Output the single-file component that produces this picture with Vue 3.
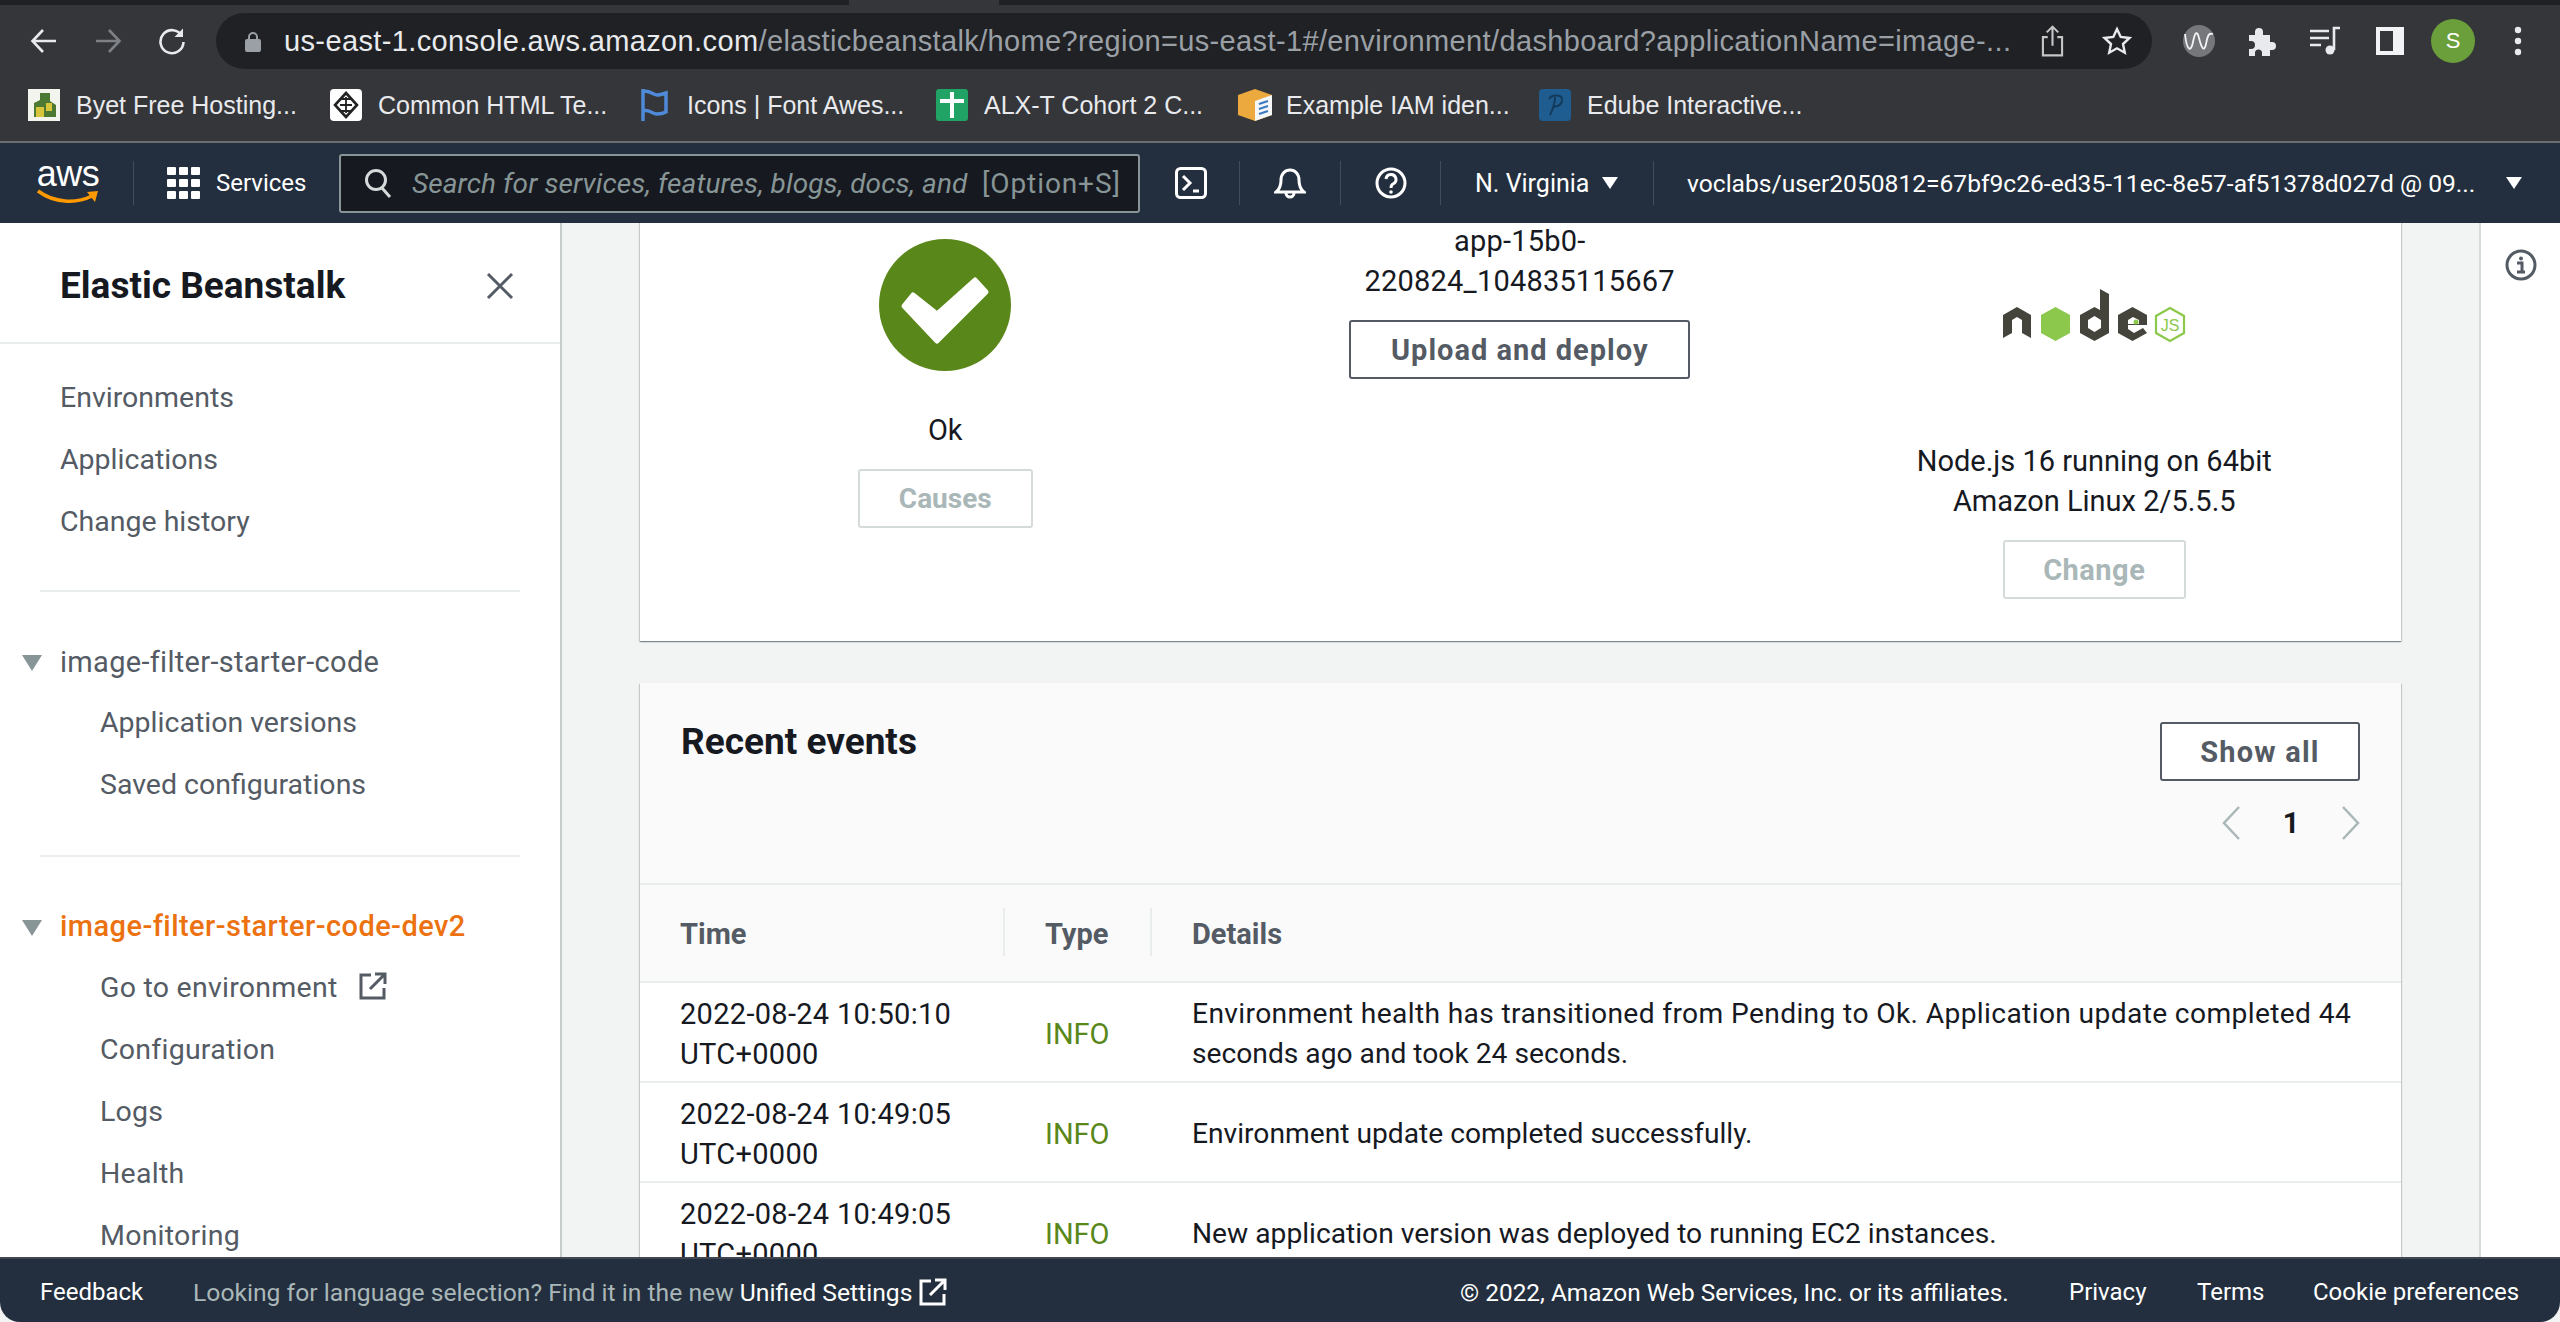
<script setup>
const bookmarks = [
  { id: 'byet', label: 'Byet Free Hosting...', width: 302 },
  { id: 'html', label: 'Common HTML Te...', width: 311 },
  { id: 'flag', label: 'Icons | Font Awes...', width: 295 },
  { id: 'sheet', label: 'ALX-T Cohort 2 C...', width: 302 },
  { id: 'box', label: 'Example IAM iden...', width: 301 },
  { id: 'edube', label: 'Edube Interactive...', width: 263 }
]

const events = [
  {
    time: ['2022-08-24 10:50:10', 'UTC+0000'],
    details: 'Environment health has transitioned from Pending to Ok. Application update completed 44 seconds ago and took 24 seconds.'
  },
  {
    time: ['2022-08-24 10:49:05', 'UTC+0000'],
    details: 'Environment update completed successfully.'
  },
  {
    time: ['2022-08-24 10:49:05', 'UTC+0000'],
    details: 'New application version was deployed to running EC2 instances.'
  }
]
</script>

<template>
  <div class="app">
    <div class="tabstrip"><div class="tab"></div></div>

    <div class="toolbar">
      <div class="nav-btns">
        <svg class="tb-icon" viewBox="0 0 28 28" fill="none" stroke="#e8eaed" stroke-width="2.6"><path d="M26 14H3M13 3 2.5 14 13 25" /></svg>
        <svg class="tb-icon dim" viewBox="0 0 28 28" fill="none" stroke="#7e8185" stroke-width="2.6"><path d="M2 14h23M15 3l10.5 11L15 25" /></svg>
        <svg class="tb-icon" viewBox="0 0 28 28" fill="none" stroke="#e8eaed" stroke-width="2.6"><path d="M24 9a11.5 11.5 0 1 0 1.5 6" /><path d="M25 1.5V10h-8.5z" fill="#e8eaed" stroke="none" /></svg>
      </div>
      <div class="urlbar">
        <svg class="lock" viewBox="0 0 16 21"><path d="M4 9V6a4 4 0 0 1 8 0v3" fill="none" stroke="#9aa0a6" stroke-width="2" /><rect y="8" width="16" height="13" rx="2" fill="#9aa0a6" /></svg>
        <div class="url"><span class="host">us-east-1.console.aws.amazon.com</span>/elasticbeanstalk/home?region=us-east-1#/environment/dashboard?applicationName=image-...</div>
        <svg class="share" viewBox="0 0 24 34" fill="none" stroke="#c4c7c5" stroke-width="2.2"><path d="M12 22V2M6 8l6-6 6 6M7 13H2v19h20V13h-5" /></svg>
        <svg class="star" viewBox="0 0 30 30" fill="none" stroke="#e8eaed" stroke-width="2.4"><path d="M15 3l3.700 8 8.800 1-6.500 6 1.800 8.700L15 22.300 7.200 26.700l1.800-8.700-6.500-6 8.800-1z" /></svg>
      </div>
      <div class="ext-icons">
        <svg class="ext" viewBox="0 0 32 32"><circle cx="16" cy="16" r="16" fill="#75777a" /><path d="M2 9c2 18 6 18 8 8s4-12 6-4 5 16 7 6 3-11 7-10" fill="none" stroke="#f1f3f4" stroke-width="1.800" /></svg>
        <svg class="puzzle" viewBox="0 0 30 30"><path d="M3 9h6V6a4 4 0 0 1 8 0v3h7v7h2a4 4 0 0 1 0 8h-2v6H16v-3a3.500 3.500 0 0 0-7 0v3H3v-7h2a4 4 0 0 0 0-8H3z" fill="#e8eaed" /></svg>
        <svg class="queue" viewBox="0 0 32 30" fill="none" stroke="#e8eaed" stroke-width="2.600"><path d="M1 5h19M1 12h19M1 19h11M25 24V2h6" /><circle cx="21" cy="24" r="4.500" fill="#e8eaed" stroke="none" /></svg>
        <svg class="panel" viewBox="0 0 28 28"><rect width="28" height="28" fill="#f1f3f4" /><rect x="4" y="4" width="13" height="20" fill="#35363a" /></svg>
        <div class="avatar">S</div>
        <svg class="kebab" viewBox="0 0 8 32"><circle cx="4" cy="5" r="3.200" fill="#e8eaed" /><circle cx="4" cy="16" r="3.200" fill="#e8eaed" /><circle cx="4" cy="27" r="3.200" fill="#e8eaed" /></svg>
      </div>
    </div>

    <div class="bookmarks">
      <div v-for="b in bookmarks" :key="b.id" class="bookmark" :style="{ width: b.width + 'px' }">
        <svg v-if="b.id === 'byet'" class="fav" viewBox="0 0 32 32"><rect width="32" height="32" fill="#f4f4ee" /><path d="M12 4h10v8l6 4v12H6V14l6-3z" fill="#4d7a33" /><path d="M8 18h8v10H8zM18 14h6v8h-6z" fill="#d7c53c" /></svg>
        <svg v-else-if="b.id === 'html'" class="fav" viewBox="0 0 32 32"><rect width="32" height="32" rx="4" fill="#fff" /><path d="M16 4 27 16 16 28 5 16z" fill="none" stroke="#222" stroke-width="2.600" /><path d="M11 10h10M11 22h10M10 16h12M16 8v16" stroke="#222" stroke-width="1.800" /></svg>
        <svg v-else-if="b.id === 'flag'" class="fav flag" viewBox="0 0 28 32"><path d="M2 0v32M2 3c6-3 9 3 14 3 3 0 6-1 9-2v19c-4 2-6 2-9 2-5 0-8-5-14-3" fill="none" stroke="#4f8ad8" stroke-width="3.500" /></svg>
        <svg v-else-if="b.id === 'sheet'" class="fav" viewBox="0 0 32 32"><rect width="32" height="32" rx="3" fill="#21a366" /><path d="M16 3v26M4 12h24" stroke="#fff" stroke-width="4" /></svg>
        <svg v-else-if="b.id === 'box'" class="fav wide" viewBox="0 0 34 32"><path d="M17 0 34 6v20L17 32 0 26V6z" fill="#eca93e" /><path d="M17 12v20l17-6V6z" fill="#f4f6f8" /><path d="M21 15l9-3M21 20l9-3M21 25l9-3" stroke="#3b78c2" stroke-width="2" /></svg>
        <svg v-else class="fav" viewBox="0 0 32 32"><rect width="32" height="32" rx="4" fill="#1f5c90" /><path d="M10 10c3-5 15-5 13 2-1 5-6 6-9 5M16 8c0 8-3 14-5 18" fill="none" stroke="#143a5a" stroke-width="2" /></svg>
        <span class="bm-label">{{ b.label }}</span>
      </div>
    </div>

    <header class="awsnav">
      <div class="aws-logo">
        <span class="aws-word">aws</span>
        <svg class="smile" viewBox="0 0 62 16"><path d="M1 2c16 12 38 13 54 5" fill="none" stroke="#ff9900" stroke-width="3.500" /><path d="M50 3l11-1-3 11z" fill="#ff9900" /></svg>
      </div>
      <div class="nav-sep sep-logo"></div>
      <svg class="grid-icon" viewBox="0 0 33 32"><g fill="#fff"><rect width="9" height="8" rx="1" /><rect x="12" width="9" height="8" rx="1" /><rect x="24" width="9" height="8" rx="1" /><rect y="12" width="9" height="8" rx="1" /><rect x="12" y="12" width="9" height="8" rx="1" /><rect x="24" y="12" width="9" height="8" rx="1" /><rect y="24" width="9" height="8" rx="1" /><rect x="12" y="24" width="9" height="8" rx="1" /><rect x="24" y="24" width="9" height="8" rx="1" /></g></svg>
      <span class="services">Services</span>
      <div class="search">
        <svg class="search-icon" viewBox="0 0 28 30" fill="none" stroke="#d5dbdb" stroke-width="3"><circle cx="12" cy="12" r="9.500" /><path d="M18 20l8 9" /></svg>
        <span class="placeholder">Search for services, features, blogs, docs, and</span>
        <span class="shortcut">[Option+S]</span>
      </div>
      <svg class="term-icon" viewBox="0 0 32 32" fill="none" stroke="#fff" stroke-width="3"><rect x="1.500" y="1.500" width="29" height="29" rx="4" /><path d="M8 9l7 7-7 7" /><path d="M18 24h6" /></svg>
      <div class="nav-sep sep-term"></div>
      <svg class="bell-icon" viewBox="0 0 32 32" fill="none" stroke="#fff" stroke-width="3"><path d="M2 25c4-3 5-7 5-12 0-6 4-10 9-10s9 4 9 10c0 5 1 9 5 12z" /><path d="M12 26a4 4 0 0 0 8 0" /></svg>
      <div class="nav-sep sep-bell"></div>
      <svg class="help-icon" viewBox="0 0 32 32" fill="none" stroke="#fff" stroke-width="3"><circle cx="16" cy="16" r="14" /><path d="M11 12a5 5 0 1 1 7 5c-2 1-2 2-2 4" /><circle cx="16" cy="25" r="1.800" fill="#fff" stroke="none" /></svg>
      <div class="nav-sep sep-help"></div>
      <span class="region">N. Virginia</span>
      <span class="caret caret-region"></span>
      <div class="nav-sep sep-region"></div>
      <span class="account">voclabs/user2050812=67bf9c26-ed35-11ec-8e57-af51378d027d @ 09...</span>
      <span class="caret caret-account"></span>
    </header>

    <div class="body">
      <aside class="sidebar">
        <div class="side-head">
          <span class="side-title">Elastic Beanstalk</span>
          <svg class="close" viewBox="0 0 28 28" fill="none" stroke="#545b64" stroke-width="3"><path d="M2 2l24 24M26 2 2 26" /></svg>
        </div>
        <div class="side-group first">
          <a>Environments</a>
          <a>Applications</a>
          <a>Change history</a>
        </div>
        <div class="side-line"></div>
        <div class="side-group">
          <a class="parent"><i class="tri"></i>image-filter-starter-code</a>
          <a class="sub">Application versions</a>
          <a class="sub">Saved configurations</a>
        </div>
        <div class="side-line"></div>
        <div class="side-group">
          <a class="parent active"><i class="tri"></i>image-filter-starter-code-dev2</a>
          <a class="sub">Go to environment
            <svg class="ext-link" viewBox="0 0 28 28" fill="none" stroke="#545b64" stroke-width="3"><path d="M12 3H2v23h23V16" /><path d="M11 17 25 3M16 2h10v10" /></svg>
          </a>
          <a class="sub">Configuration</a>
          <a class="sub">Logs</a>
          <a class="sub">Health</a>
          <a class="sub">Monitoring</a>
        </div>
      </aside>

      <main class="main">
        <section class="card summary">
          <div class="col">
            <svg class="ok-icon" viewBox="0 0 132 132"><circle cx="66" cy="66" r="66" fill="#5a8719" /><path d="M25 67l9-11 24 19 38-34 11 12-49 49z" fill="#fff" stroke="#fff" stroke-width="5" stroke-linejoin="round" /></svg>
            <div class="ok-label">Ok</div>
            <button class="btn disabled causes">Causes</button>
          </div>
          <div class="col middle">
            <div class="version">app-15b0-<br />220824_104835115667</div>
            <button class="btn upload">Upload and deploy</button>
          </div>
          <div class="col">
            <svg class="node-logo" viewBox="0 0 184 54">
              <path d="M0 26 14 18l14 8v23l-9-5V31l-5-3-5 3v13l-9 5z" fill="#44443c" />
              <path d="M52.500 18 67 26v18l-14.500 8L38 44V26z" fill="#8cc84b" />
              <path d="M97 0l9 5v39l-14.500 8L77 44V26l14.500-8 5.500 3zM91.500 27l-6.500 4v8l6.500 4 6.500-4v-8z" fill="#44443c" fill-rule="evenodd" />
              <path d="M129.500 18 144 26v10l-19 0 0 4 6 4 9-5 4 5-14.500 8L115 44V26z" fill="#44443c" />
              <path d="M125 31l5-3 6 3v4h-11z" fill="#fff" />
              <circle cx="133" cy="33" r="2.500" fill="#8cc84b" />
              <path d="M167 19 181 27v17l-14 8-14-8V27z" fill="none" stroke="#8cc84b" stroke-width="2.200" />
              <text x="167" y="41.500" class="js-text">JS</text>
            </svg>
            <div class="platform">Node.js 16 running on 64bit<br />Amazon Linux 2/5.5.5</div>
            <button class="btn disabled change">Change</button>
          </div>
        </section>

        <section class="card events">
          <div class="ev-head">
            <h2>Recent events</h2>
            <div class="ev-actions">
              <button class="btn showall">Show all</button>
              <div class="pager">
                <svg viewBox="0 0 18 36" fill="none" stroke="#aab7b8" stroke-width="2.500"><path d="M17 2 2 18l15 16" /></svg>
                <span>1</span>
                <svg viewBox="0 0 18 36" fill="none" stroke="#aab7b8" stroke-width="2.500"><path d="M1 2l15 16L1 34" /></svg>
              </div>
            </div>
          </div>
          <div class="ev-columns">
            <div class="th">Time</div>
            <div class="th">Type</div>
            <div class="th">Details</div>
          </div>
          <div v-for="(ev, i) in events" :key="i" class="ev-row" :class="{ long: i === 0 }">
            <div class="td-time">{{ ev.time[0] }}<br />{{ ev.time[1] }}</div>
            <div class="td-type">INFO</div>
            <div class="td-details">{{ ev.details }}</div>
          </div>
        </section>
      </main>

      <aside class="tools">
        <svg class="info-icon" viewBox="0 0 32 32" fill="none" stroke="#545b64" stroke-width="3"><circle cx="16" cy="16" r="14" /><circle cx="16" cy="9.500" r="2" fill="#545b64" stroke="none" /><path d="M12 14h5v9M12 23h8" /></svg>
      </aside>
    </div>

    <footer class="footer">
      <span class="feedback">Feedback</span>
      <span class="lang">Looking for language selection? Find it in the new <b>Unified Settings</b></span>
      <svg class="ext-link-white" viewBox="0 0 28 28" fill="none" stroke="#fff" stroke-width="3"><path d="M12 3H2v23h23V16" /><path d="M11 17 25 3M16 2h10v10" /></svg>
      <span class="copyright">© 2022, Amazon Web Services, Inc. or its affiliates.</span>
      <span class="privacy">Privacy</span>
      <span class="terms">Terms</span>
      <span class="cookies">Cookie preferences</span>
    </footer>
  </div>
</template>

<style>
html, body { margin: 0; background: #0c0d0f; }
</style>

<style scoped>
.app {
  width: 2560px;
  height: 1322px;
  overflow: hidden;
  display: flex;
  flex-direction: column;
  font-family: Roboto, "Noto Sans", sans-serif;
  font-size: 29px;
  color: #16191f;
  background: #f2f3f3;
}

/* browser chrome */
.tabstrip { height: 5px; background: #202124; flex: none; }
.tab { width: 150px; height: 5px; margin-left: 849px; background: #35363a; }

.toolbar {
  height: 71px;
  flex: none;
  background: #35363a;
  display: flex;
  align-items: flex-start;
  padding-top: 8px;
  box-sizing: border-box;
}
.nav-btns { width: 216px; display: flex; flex: none; padding: 14px 0 0 30px; box-sizing: border-box; gap: 36px; }
.tb-icon { width: 28px; height: 28px; }
.urlbar {
  width: 1936px;
  height: 56px;
  flex: none;
  border-radius: 28px;
  background: #202124;
  display: flex;
  align-items: center;
  padding-left: 29px;
  box-sizing: border-box;
}
.lock { width: 16px; height: 21px; flex: none; }
.url {
  width: 1730px;
  margin-left: 23px;
  flex: none;
  font-family: "Liberation Sans", sans-serif;
  font-size: 29px;
  letter-spacing: 0.370px;
  color: #9aa0a6;
  white-space: nowrap;
  overflow: hidden;
}
.host { color: #e8eaed; }
.share { width: 23px; height: 34px; margin-left: 27px; flex: none; }
.star { width: 30px; height: 30px; margin-left: 38px; flex: none; }
.ext-icons { display: flex; align-items: center; height: 56px; margin-left: 31px; }
.ext { width: 32px; height: 32px; flex: none; }
.puzzle { width: 30px; height: 30px; margin-left: 31px; flex: none; }
.queue { width: 32px; height: 30px; margin-left: 33px; flex: none; }
.panel { width: 28px; height: 28px; margin-left: 35px; flex: none; }
.avatar {
  width: 44px;
  height: 44px;
  margin-left: 27px;
  flex: none;
  border-radius: 50%;
  background: #6a9f3b;
  color: #fff;
  font-family: "Liberation Sans", sans-serif;
  font-size: 22px;
  line-height: 44px;
  text-align: center;
}
.kebab { width: 8px; height: 32px; margin-left: 39px; flex: none; }

.bookmarks {
  height: 65px;
  flex: none;
  box-sizing: content-box;
  background: #35363a;
  border-bottom: 2px solid #6b6d71;
  display: flex;
  align-items: flex-start;
  padding-left: 28px;
}
.bookmark { display: flex; align-items: center; flex: none; height: 32px; margin-top: 13px; }
.fav { width: 32px; height: 32px; flex: none; }
.fav.wide { width: 34px; margin-right: -2px; }
.fav.flag { width: 28px; margin-right: 2px; }
.bm-label {
  margin-left: 16px;
  font-family: "Liberation Sans", sans-serif;
  font-size: 25px;
  color: #e8eaed;
  white-space: nowrap;
}

/* aws console top nav */
.awsnav {
  height: 80px;
  flex: none;
  background: #232f3e;
  color: #fff;
  display: flex;
  align-items: center;
  box-sizing: border-box;
}
.aws-logo { width: 62px; margin-left: 37px; flex: none; display: flex; flex-direction: column; align-items: center; }
.aws-word { font-family: "Liberation Sans", sans-serif; font-size: 36px; line-height: 26px; letter-spacing: -0.5px; color: #fff; }
.smile { width: 62px; height: 16px; margin-top: 2px; }
.nav-sep { width: 1px; height: 44px; background: #414d5c; flex: none; }
.sep-logo { margin-left: 34px; }
.grid-icon { width: 33px; height: 32px; margin-left: 33px; flex: none; }
.services { margin-left: 16px; width: 123px; flex: none; font-size: 24px; }
.search {
  width: 801px;
  height: 59px;
  flex: none;
  box-sizing: border-box;
  border: 2px solid #879596;
  border-radius: 3px;
  background: #16191f;
  display: flex;
  align-items: center;
  padding-left: 23px;
  font-size: 28px;
  color: #879596;
  white-space: nowrap;
}
.search-icon { width: 28px; height: 30px; flex: none; }
.placeholder { width: 570px; margin-left: 20px; flex: none; font-style: italic; letter-spacing: 0.100px; overflow: hidden; }
.shortcut { flex: none; letter-spacing: 0.900px; }
.term-icon { width: 32px; height: 32px; margin-left: 35px; flex: none; }
.sep-term { margin-left: 32px; }
.bell-icon { width: 32px; height: 32px; margin-left: 34px; flex: none; }
.sep-bell { margin-left: 34px; }
.help-icon { width: 32px; height: 32px; margin-left: 34px; flex: none; }
.sep-help { margin-left: 33px; }
.region { width: 114px; margin-left: 34px; flex: none; font-size: 25px; white-space: nowrap; }
.caret { width: 0; height: 0; flex: none; border-left: 8px solid transparent; border-right: 8px solid transparent; border-top: 12px solid #fff; }
.caret-region { margin-left: 13px; }
.sep-region { margin-left: 35px; }
.account { width: 806px; margin-left: 33px; flex: none; font-size: 24.600px; white-space: nowrap; }
.caret-account { margin-left: 13px; }

.body { flex: 1; min-height: 0; display: flex; overflow: hidden; }

/* left navigation */
.sidebar {
  width: 562px;
  flex: none;
  box-sizing: border-box;
  background: #fff;
  border-right: 2px solid #c6cccc;
  overflow: hidden;
  font-size: 28.500px;
}
.side-head {
  height: 121px;
  box-sizing: border-box;
  border-bottom: 2px solid #eaeded;
  display: flex;
  align-items: center;
  justify-content: space-between;
  padding: 6px 46px 0 60px;
}
.side-title { font-size: 37px; font-weight: 700; }
.close { width: 28px; height: 28px; }
.side-group { padding-top: 39px; display: flex; flex-direction: column; }
.side-group.first { padding-top: 22px; }
.side-group a {
  display: flex;
  align-items: center;
  height: 62px;
  box-sizing: border-box;
  padding-left: 60px;
  color: #545b64;
  white-space: nowrap;
  position: relative;
}
.side-group a.sub { padding-left: 100px; padding-bottom: 3px; }
.side-group a.parent { font-size: 29px; letter-spacing: 0.300px; }
.side-group a.active { color: #ec7211; font-weight: 500; letter-spacing: 0.430px; padding-bottom: 2px; }
.side-group a.active ~ .sub { letter-spacing: 0.250px; }
.tri {
  position: absolute;
  left: 22px;
  top: 24px;
  width: 0;
  height: 0;
  border-left: 10px solid transparent;
  border-right: 10px solid transparent;
  border-top: 16px solid #879596;
}
.side-line { height: 2px; margin: 38px 40px 0; background: #eaeded; }
.ext-link { width: 28px; height: 28px; margin-left: 22px; margin-top: -4px; }

/* main column */
.main {
  flex: none;
  width: 1917px;
  box-sizing: border-box;
  padding: 0 78px 0 78px;
  overflow: hidden;
}
.card {
  background: #fff;
  box-shadow: 0 1px 1px 0 rgba(0, 28, 36, 0.3), 1px 1px 1px 0 rgba(0, 28, 36, 0.15), -1px 1px 1px 0 rgba(0, 28, 36, 0.15);
}
.summary {
  height: 458px;
  margin-top: -40px;
  box-sizing: border-box;
  display: grid;
  grid-template-columns: repeat(3, 574.500px);
  padding: 38px 0 0 18px;
}
.col { display: flex; flex-direction: column; align-items: center; text-align: center; }
.ok-icon { width: 132px; height: 132px; margin-top: 18px; flex: none; }
.ok-label { line-height: 40px; margin-top: 39px; }
.btn {
  display: block;
  font-family: inherit;
  font-size: 29px;
  font-weight: 700;
  height: 59px;
  box-sizing: border-box;
  padding: 0;
  background: #fff;
  border: 2px solid #545b64;
  border-radius: 3px;
  color: #545b64;
  flex: none;
}
.btn.disabled { border-color: #d5dbdb; color: #aab7b8; }
.causes { width: 175px; margin-top: 19px; font-size: 28px; }
.version { line-height: 40px; margin-top: 0; letter-spacing: 0.200px; }
.upload { width: 341px; margin-top: 19px; letter-spacing: 1px; }
.node-logo { width: 184px; height: 54px; margin-top: 68px; flex: none; margin-left: 1px; }
.js-text { font-family: "Liberation Sans", sans-serif; font-size: 16px; font-weight: 400; fill: #8cc84b; text-anchor: middle; }
.platform { line-height: 40px; margin-top: 98px; }
.change { width: 183px; margin-top: 19px; letter-spacing: 0.500px; }

.events { margin-top: 42px; }
.ev-head {
  height: 202px;
  box-sizing: border-box;
  background: #fafafa;
  border-bottom: 2px solid #eaeded;
  display: flex;
  justify-content: space-between;
  padding: 39px 41px 0 41px;
}
.ev-head h2 { margin: 0; font-size: 37px; font-weight: 700; line-height: 40px; }
.ev-actions { display: flex; flex-direction: column; align-items: flex-end; }
.showall { width: 200px; background: #fff; letter-spacing: 1.200px; }
.pager { display: flex; align-items: center; margin-top: 24px; height: 36px; }
.pager svg { width: 18px; height: 36px; flex: none; }
.pager span { width: 102px; text-align: center; font-weight: 700; }
.ev-columns {
  height: 98px;
  box-sizing: border-box;
  background: #fafafa;
  border-bottom: 2px solid #eaeded;
  display: grid;
  grid-template-columns: 365px 147px 1fr;
  align-items: center;
}
.th { height: 48px; line-height: 53px; padding-left: 40px; color: #545b64; font-weight: 700; border-right: 2px solid #eaeded; margin-top: -2px; }
.th:last-child { border-right: 0; }
.ev-row {
  height: 100px;
  box-sizing: border-box;
  border-bottom: 2px solid #eaeded;
  display: grid;
  grid-template-columns: 365px 147px 1fr;
  align-items: center;
  background: #fff;
  line-height: 40px;
  padding-top: 4px;
}
.td-time { padding-left: 40px; white-space: nowrap; letter-spacing: 0.300px; }
.td-type { padding-left: 40px; color: #5a8719; }
.td-details { padding-left: 40px; padding-right: 20px; font-size: 28.200px; }
.long .td-details::first-line { letter-spacing: 0.360px; }

.tools {
  flex: 1;
  background: #fff;
  border-left: 2px solid #d5dbdb;
  display: flex;
  justify-content: center;
  padding-top: 26px;
  box-sizing: border-box;
}
.info-icon { width: 32px; height: 32px; }

/* console footer */
.footer {
  height: 65px;
  flex: none;
  box-sizing: border-box;
  background: #232f3e;
  border-top: 2px solid #414750;
  border-radius: 0 0 20px 20px;
  padding-top: 3px;
  display: flex;
  align-items: center;
  color: #fff;
  font-size: 24px;
  white-space: nowrap;
}
.feedback { margin-left: 40px; width: 153px; flex: none; }
.lang { color: #aab7b8; width: 724px; flex: none; font-size: 24.700px; }
.lang b { color: #fff; font-weight: 400; }
.ext-link-white { width: 28px; height: 28px; margin-left: 2px; flex: none; }
.copyright { margin-left: 513px; width: 609px; flex: none; font-size: 24.400px; }
.privacy { width: 128px; flex: none; }
.terms { width: 116px; flex: none; }
.cookies { flex: none; }
</style>
